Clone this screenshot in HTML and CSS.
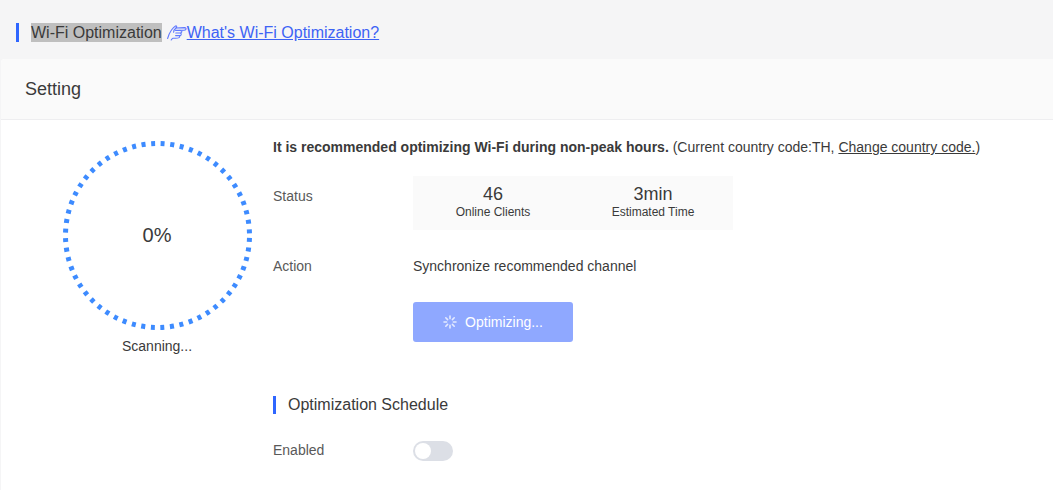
FILE: index.html
```html
<!DOCTYPE html>
<html lang="en">
<head>
<meta charset="utf-8">
<title>Wi-Fi Optimization</title>
<link rel="stylesheet" href="styles.css">
</head>
<body>
<header class="page-title">
  <span class="title-bar"></span>
  <span class="title-text">Wi-Fi Optimization</span>
  <a class="help-link" href="#">
    <svg class="hand" viewBox="0 0 20 16" width="20" height="16" fill="none" stroke="#5f78ff" stroke-width="1.1" stroke-linecap="round" stroke-linejoin="round">
      <path d="M0.6 13.5 Q2 8.5 4.5 5 Q6.5 2.2 8.5 1 Q10 0.6 9.6 2.2 L9 3 L17.5 2.6 Q19.6 3 18.8 4.4 Q18.4 5.2 17 5.2 L13 5.4 Q15 5.6 14.8 7 Q14.6 8 13.5 8 Q14.6 8.6 14 10 Q13.6 10.8 12.6 10.6 Q13 11.8 12 12.6 Q11 13.2 8.5 13.2 L6 13.2 Q5 13.6 4.2 15"/>
      <path d="M9 3 Q6.6 5 6.6 7.2 M8.6 5.4 L13 5.4 M8.8 8 L13.5 8 M8.6 10.6 L12.6 10.6"/>
    </svg><span>What's Wi-Fi Optimization?</span>
  </a>
</header>
<main class="card">
  <div class="card-head">Setting</div>
  <div class="card-body">
    <section class="scan">
      <div class="ring">
        <svg viewBox="0 0 188 188" width="188" height="188">
          <circle class="ring-dash" cx="94.5" cy="94.5" r="92"></circle>
        </svg>
        <span class="ring-value">0%</span>
      </div>
      <div class="scan-label">Scanning...</div>
    </section>
    <section class="details">
      <p class="notice"><strong>It is recommended optimizing Wi-Fi during non-peak hours.</strong> (Current country code:TH, <a href="#">Change country code.</a>)</p>
      <div class="row row-status">
        <div class="label">Status</div>
        <div class="stats">
          <div class="stat"><div class="stat-num">46</div><div class="stat-name">Online Clients</div></div>
          <div class="stat"><div class="stat-num">3min</div><div class="stat-name">Estimated Time</div></div>
        </div>
      </div>
      <div class="row row-action">
        <div class="label">Action</div>
        <div>Synchronize recommended channel</div>
      </div>
      <div class="row row-button">
        <div class="label"></div>
        <button class="optimize" type="button">
          <svg class="spin" viewBox="0 0 14 14" width="14" height="14" stroke="#e4eaff" stroke-width="1.6" stroke-linecap="round">
            <path d="M7 1V3.6M7 10.4V13M1 7H3.6M10.4 7H13M2.8 2.8L4.6 4.6M9.4 9.4L11.2 11.2M2.8 11.2L4.6 9.4M9.4 4.6L11.2 2.8"/>
          </svg>
          <span>Optimizing...</span>
        </button>
      </div>
      <h2 class="section-title">Optimization Schedule</h2>
      <div class="row row-toggle">
        <div class="label label-toggle">Enabled</div>
        <span class="toggle"><span class="knob"></span></span>
      </div>
    </section>
  </div>
</main>
</body>
</html>
```

FILE: styles.css
```css
* { box-sizing: border-box; }
html, body { height: 100%; }
body {
  margin: 0;
  height: 490px;
  overflow: hidden;
  background: #f5f5f6;
  color: #3a3a3a;
  font-family: "Liberation Sans", Arial, sans-serif;
  font-size: 14px;
}
.page-title {
  height: 59px;
  padding: 23px 0 0 16px;
  display: flex;
  align-items: flex-start;
  font-size: 16px;
  line-height: 19px;
}
.title-bar { width: 3px; height: 19px; background: #2f66ff; margin-right: 12px; }
.title-text { background: #bfbfbf; margin-right: 5px; }
.help-link { color: #3d63f5; display: inline-flex; align-items: flex-start; text-decoration: underline; }
.hand { margin-top: 2px; flex: none; }
.card {
  margin-left: 1px;
  height: 431px;
  background: #fff;
  border-radius: 4px 0 0 0;
  overflow: hidden;
}
.card-head {
  height: 61px;
  padding: 0 24px;
  line-height: 60px;
  background: #fafafa;
  border-bottom: 1px solid #eeeef0;
  font-size: 18px;
}
.card-body { display: flex; }
.scan { width: 272px; flex: none; padding: 21px 0 0 62px; }
.ring { position: relative; width: 188px; height: 188px; }
.ring svg { display: block; overflow: visible; }
.ring-dash {
  fill: none;
  stroke: #3d8bff;
  stroke-width: 5;
  stroke-dasharray: 4 5.634;
  stroke-dashoffset: -2.5;
}
.ring-value {
  position: absolute;
  inset: 0;
  display: flex;
  align-items: center;
  justify-content: center;
  font-size: 20px;
}
.scan-label { width: 188px; text-align: center; margin-top: 9px; line-height: 16px; }
.details { flex: 1; padding-top: 18px; }
.notice { margin: 0; line-height: 18px; height: 38px; white-space: nowrap; }
.notice a { color: inherit; text-decoration: underline; }
.row { display: flex; }
.label { width: 140px; flex: none; color: #595959; }
.row-status .label { padding-top: 12px; line-height: 16px; }
.stats { width: 320px; height: 54px; background: #fafafa; display: flex; }
.stat { flex: 1; text-align: center; padding-top: 9px; }
.stat-num { font-size: 18px; line-height: 19px; }
.stat-name { font-size: 12px; line-height: 16px; }
.row-action { margin-top: 28px; line-height: 16px; }
.row-button { margin-top: 28px; }
.optimize {
  width: 160px;
  height: 40px;
  border: 0;
  border-radius: 3px;
  background: #8fa8ff;
  color: #fff;
  font: inherit;
  display: flex;
  align-items: center;
  justify-content: center;
  gap: 8px;
}
.section-title {
  margin: 54px 0 0;
  height: 18px;
  border-left: 3px solid #2f66ff;
  padding-left: 12px;
  font-size: 16px;
  font-weight: 400;
  line-height: 18px;
}
.row-toggle { margin-top: 27px; align-items: center; }
.label-toggle { padding-bottom: 2px; }
.toggle { display: block; width: 40px; height: 20px; border-radius: 10px; background: #dcdfe6; padding: 2px; }
.knob { display: block; width: 16px; height: 16px; border-radius: 50%; background: #fff; }
```
